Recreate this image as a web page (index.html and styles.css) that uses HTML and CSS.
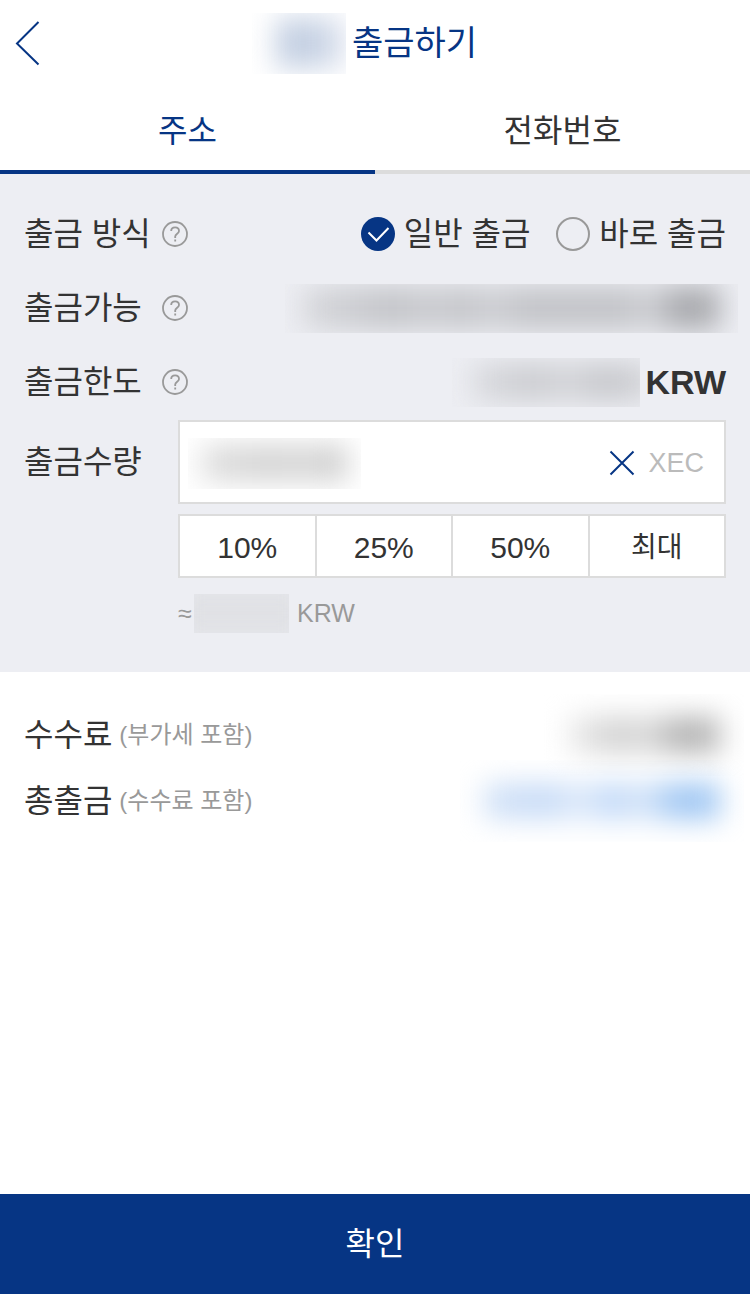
FILE: index.html
```html
<!DOCTYPE html>
<html lang="ko">
  <head>
    <meta charset="utf-8">
    <meta name="viewport" content="width=device-width, initial-scale=1">
    <title>출금하기</title>
    <link rel="stylesheet" href="styles.css">
  </head>
  <body>
    <header class="header">
      <button type="button" class="back" aria-label="뒤로">
        <svg width="26" height="46" viewBox="0 0 26 46" fill="none" stroke="currentColor" stroke-width="2">
          <path d="M24.500 2L3 23.500L24.500 44.500" />
        </svg>
      </button>
      <h1><span class="hidden-value coin"></span>출금하기</h1>
    </header>

    <nav class="tabs">
      <button type="button" class="tab active">주소</button>
      <button type="button" class="tab">전화번호</button>
    </nav>

    <main>
      <form class="panel" id="withdraw">
        <div class="row">
          <span class="label">출금 방식</span>
          <button type="button" class="help" aria-label="출금 방식 도움말">
            <svg width="26" height="26" viewBox="0 0 26 26" fill="none" stroke="currentColor" stroke-width="1.800">
              <circle cx="13" cy="13" r="12" />
              <path d="M9.200 10C9.200 7.600 10.800 6.300 13.100 6.300S17 7.700 17 9.900C17 12.600 13.200 12.800 13.200 15.600V17M13.200 18.500V20.600" />
            </svg>
          </button>
          <div class="radios">
            <label><input type="radio" name="method" checked>일반 출금</label>
            <label><input type="radio" name="method">바로 출금</label>
          </div>
        </div>

        <div class="row">
          <span class="label">출금가능</span>
          <button type="button" class="help" aria-label="출금가능 도움말">
            <svg width="26" height="26" viewBox="0 0 26 26" fill="none" stroke="currentColor" stroke-width="1.800">
              <circle cx="13" cy="13" r="12" />
              <path d="M9.200 10C9.200 7.600 10.800 6.300 13.100 6.300S17 7.700 17 9.900C17 12.600 13.200 12.800 13.200 15.600V17M13.200 18.500V20.600" />
            </svg>
          </button>
          <span class="value"><span class="hidden-value available"></span></span>
        </div>

        <div class="row">
          <span class="label">출금한도</span>
          <button type="button" class="help" aria-label="출금한도 도움말">
            <svg width="26" height="26" viewBox="0 0 26 26" fill="none" stroke="currentColor" stroke-width="1.800">
              <circle cx="13" cy="13" r="12" />
              <path d="M9.200 10C9.200 7.600 10.800 6.300 13.100 6.300S17 7.700 17 9.900C17 12.600 13.200 12.800 13.200 15.600V17M13.200 18.500V20.600" />
            </svg>
          </button>
          <span class="value"><span class="hidden-value limit"></span>KRW</span>
        </div>

        <div class="amount">
          <label class="amount-label" for="amount">출금수량</label>
          <div class="amount-fields">
            <div class="amount-box">
              <span class="hidden-value entered"></span>
              <input type="text" id="amount" inputmode="decimal">
              <button type="button" class="clear" aria-label="지우기">
                <svg width="26" height="26" viewBox="0 0 26 26" fill="none" stroke="currentColor" stroke-width="2">
                  <path d="M1.500 1.500L24.500 24.500M24.500 1.500L1.500 24.500" />
                </svg>
              </button>
              <span class="unit">XEC</span>
            </div>
            <div class="percents">
              <button type="button">10%</button>
              <button type="button">25%</button>
              <button type="button">50%</button>
              <button type="button">최대</button>
            </div>
            <p class="approx"><span class="sign">≈</span><span class="hidden-value converted"></span>KRW</p>
          </div>
        </div>
      </form>

      <section class="totals">
        <div class="total-row">
          <span class="total-label">수수료<small>(부가세 포함)</small></span>
          <span class="hidden-value fee"></span>
        </div>
        <div class="total-row">
          <span class="total-label">총출금<small>(수수료 포함)</small></span>
          <span class="hidden-value total"></span>
        </div>
      </section>
    </main>

    <button type="submit" form="withdraw" class="confirm">확인</button>
  </body>
</html>
```
FILE: styles.css
```css
* {
  box-sizing: border-box;
}

body {
  display: flex;
  flex-direction: column;
  min-height: 100vh;
  margin: 0;
  background-color: #fff;
  color: #333;
  font-family: "Liberation Sans", "Noto Sans CJK KR", sans-serif;
  font-size: 32px;
  line-height: 48px;
}

button,
input {
  margin: 0;
  padding: 0;
  border: 0;
  background: none;
  color: inherit;
  font: inherit;
}

button {
  cursor: pointer;
}

svg {
  display: block;
}

main {
  flex: 1;
}

/* Header */
.header {
  display: grid;
  grid-template-columns: 1fr auto 1fr;
  align-items: center;
  height: 86px;
  padding: 0 14px;
  color: #063584;
}

.back {
  justify-self: start;
}

h1 {
  display: flex;
  align-items: center;
  margin: 0;
  font-size: 34px;
  font-weight: normal;
}

/* Tabs */
.tabs {
  display: flex;
}

.tab {
  flex: 1;
  height: 88px;
  padding-top: 6px;
  border-bottom: 4px solid #dcdcdc;
}

.tab.active {
  border-color: #063584;
  color: #063584;
}

/* Withdrawal form */
.panel {
  padding: 23px 24px 39px;
  background-color: #edeef3;
}

.row {
  display: flex;
  align-items: center;
  height: 74px;
}

.label {
  width: 138px;
}

.help {
  color: #999;
}

.radios {
  display: flex;
  gap: 26px;
  margin-left: auto;
}

.radios label {
  display: flex;
  align-items: center;
  gap: 9px;
}

.radios input {
  appearance: none;
  width: 34px;
  height: 34px;
  border: 2px solid #999;
  border-radius: 50%;
}

.radios input:checked {
  border: 0;
  background: #063584 url("data:image/svg+xml,%3Csvg xmlns='http://www.w3.org/2000/svg' viewBox='0 0 34 34'%3E%3Cpath d='M7.500 15.500L15.500 23.500L27.500 11' fill='none' stroke='white' stroke-width='2'/%3E%3C/svg%3E");
}

.value {
  display: flex;
  align-items: center;
  margin-left: auto;
  font-size: 34px;
  font-weight: bold;
}

.amount {
  display: flex;
  margin-top: 1px;
}

.amount-label {
  width: 154px;
  line-height: 84px;
}

.amount-fields {
  flex: 1;
  min-width: 0;
}

.amount-box {
  display: flex;
  align-items: center;
  height: 84px;
  padding: 2px 20px 0 8px;
  border: 2px solid #dcdcdc;
  background-color: #fff;
}

.amount-box input {
  flex: 1;
  min-width: 0;
  height: 52px;
}

.clear {
  margin-right: 13px;
  color: #063584;
}

.unit {
  color: #bbb;
  font-size: 27px;
}

.percents {
  display: flex;
  margin-top: 10px;
  border: 2px solid #dcdcdc;
}

.percents button {
  flex: 1;
  height: 60px;
  padding-top: 4px;
  background-color: #fff;
  font-size: 30px;
}

.percents button:last-child {
  font-size: 28px;
}

.percents button + button {
  border-left: 2px solid #dcdcdc;
}

.approx {
  display: flex;
  align-items: center;
  height: 40px;
  margin: 15px 0 0;
  color: #999;
  font-size: 25px;
}

.sign {
  width: 16px;
}

/* Fee and total */
.totals {
  padding: 30px 24px;
}

.total-row {
  display: flex;
  align-items: center;
  justify-content: space-between;
  height: 66px;
}

.total-label {
  display: flex;
  align-items: center;
  gap: 7px;
}

.total-label small {
  color: #999;
  font-size: 24px;
}

.confirm {
  height: 100px;
  background-color: #063584;
  color: #fff;
}

/* Masked values */
.hidden-value {
  display: flex;
  align-items: center;
  overflow: hidden;
}

.hidden-value::before {
  content: "";
  flex: 1;
  height: 36px;
  filter: blur(14px);
}

.coin {
  width: 94px;
  height: 61px;
  margin: 0 6px 0 -21px;
}

.coin::before {
  height: 50px;
  margin-left: 24px;
  background: linear-gradient(90deg, #c3cfe2 50%, #e2e6f1);
}

.available {
  width: 453px;
  height: 49px;
  margin-right: -12px;
}

.available::before {
  height: 42px;
  margin: 0 18px;
  background: linear-gradient(90deg, #d6d7db, #c2c3c7 90px, #cbccd0 130px, #c3c4c8 160px, #cecfd3 190px, #c2c3c7 220px, #c2c3c7 325px, #d2d3d7 350px, #a8a9ad 370px);
}

.limit {
  width: 188px;
  height: 49px;
  margin-right: 5px;
}

.limit::before {
  margin: 0 -10px 0 20px;
  background: linear-gradient(90deg, #d9dade, #c8c9cd 65px, #d4d5d9 95px, #c4c5c9 130px, #d0d1d5);
}

.entered {
  width: 173px;
  height: 51px;
  margin-right: -173px;
}

.entered::before {
  margin: 0 14px;
  background: linear-gradient(90deg, #dedede, #d2d2d2 70px, #d8d8d8 100px, #cacaca);
}

.converted {
  width: 95px;
  height: 39px;
  margin-right: 8px;
}

.converted::before {
  height: 60px;
  margin: 0 -20px;
  background-color: #e0e1e5;
}

.fee,
.total {
  height: 82px;
  margin-right: -18px;
}

.fee {
  width: 200px;
}

.fee::before {
  margin: 0 24px;
  background: linear-gradient(90deg, #eee, #cfcfcf 50px, #dcdcdc 82px, #b4b4b4 105px);
}

.total {
  width: 284px;
}

.total::before {
  margin: 0 24px;
  background: linear-gradient(90deg, #d2e2f7, #c5daf7 65px, #deeafa 95px, #bed7f8 130px, #d8e6f9 160px, #9ec6f3 190px);
}
```
